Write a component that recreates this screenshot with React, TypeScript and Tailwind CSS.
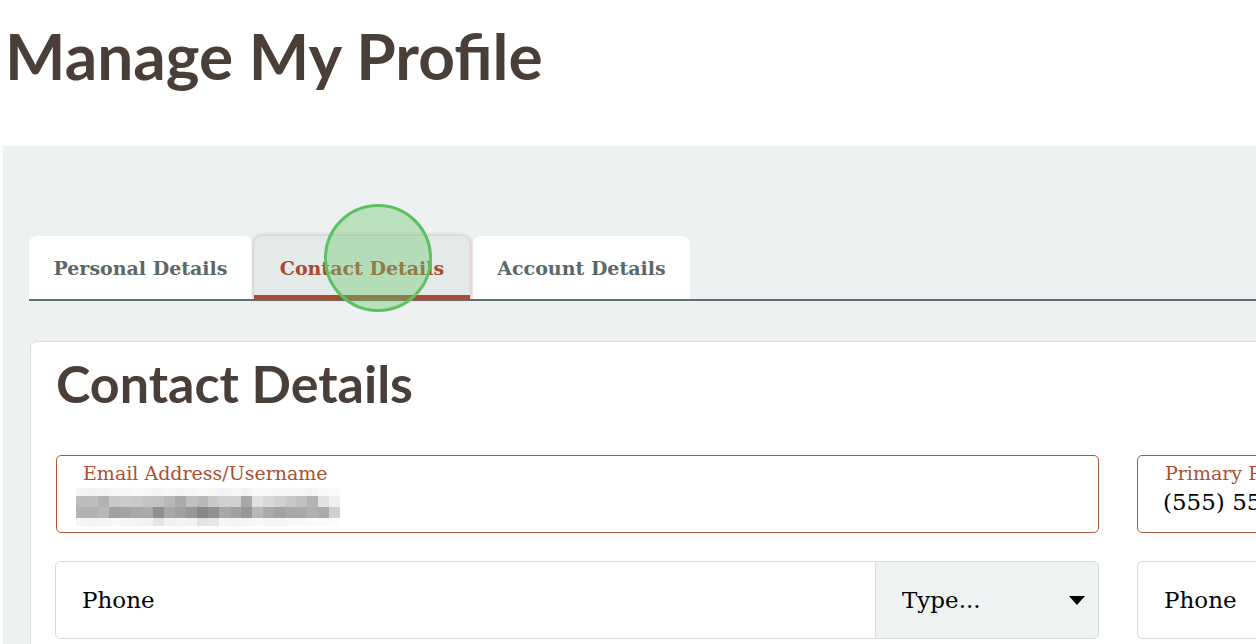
import React from "react";

const serif = { fontFamily: '"DejaVu Serif", "Liberation Serif", serif' };
const sans = { fontFamily: 'Lato, "Noto Sans", sans-serif' };

const row0 = ["#f4f4f4","#f2f2f2","#f4f4f4","#f6f6f6","#f6f6f6","#f8f8f8","#f6f6f6","#f4f4f4","#f6f6f6","#f4f4f4","#f6f6f6","#f8f8f8","#f6f6f6","#f4f4f4","#f6f6f6","#f2f2f2","#f8f8f8","#f8f8f8","#f6f6f6","#f6f6f6","#f6f6f6","#f4f4f4","#f8f8f8","#fafafa"];
const row1 = ["#bcbcbc","#bebebe","#b2b2b2","#c8c8c8","#cbcbcb","#c8c8c8","#c4c4c4","#c2c2c2","#b8b8b8","#aaaaaa","#c0c0c0","#b8b8b8","#c8c8c8","#d0d0d0","#cfcfcf","#a8a8a8","#e0e0e0","#d8d8d8","#d0d0d0","#c8c8c8","#c0c0c0","#b4b4b4","#e2e2e2","#f0f0f0"];
const row2 = ["#b2b2b2","#b2b2b2","#b8b8b8","#a0a0a0","#a2a2a2","#a8a8a8","#aaaaaa","#909090","#a8a8a8","#a0a0a0","#989898","#888888","#909090","#a8a8a8","#a2a2a2","#989898","#b8b8b8","#aaaaaa","#a2a2a2","#a8a8a8","#a8a8a8","#b0b0b0","#aaaaaa","#d0d0d0"];
const row3 = ["#f6f6f6","#f4f4f4","#f6f6f6","#f8f8f8","#f6f6f6","#f4f4f4","#f2f2f2","#e4e4e4","#f0f0f0","#f4f4f4","#f2f2f2","#e2e2e2","#e6e6e6","#f6f6f6","#f4f4f4","#f6f6f6","#f8f8f8","#f6f6f6","#f6f6f6","#f8f8f8","#f8f8f8","#fafafa","#fafafa","#fcfcfc"];

function Pixelated() {
  const rows = [row0, row1, row2, row3];
  const ys = [0, 8, 19, 30];
  const hs = [8, 11, 11, 8];
  return (
    <svg width={264} height={38} viewBox="0 0 264 38" className="block">
      {rows.map((r, ri) =>
        r.map((c, ci) => (
          <rect key={ri + "-" + ci} x={ci * 11} y={ys[ri]} width={11} height={hs[ri]} fill={c} />
        ))
      )}
    </svg>
  );
}

export default function App() {
  return (
    <div className="relative w-[1256px] h-[644px] overflow-hidden bg-white text-[#4a3f38]">
      <h1 className="pl-[5px] pt-[18px] text-[64px] leading-[1.2] font-bold text-[#4a3f38]" style={sans}>
        Manage My Profile
      </h1>

      <div className="mt-[51px] ml-[3px] w-[1600px] bg-[#edf1f2] pt-[90px] pl-[26px] pb-[40px]">
        <div className="flex items-end border-b-2 border-[#5f6e6e]" style={serif}>
          <div className="w-[223px] h-[63px] rounded-t-lg bg-white flex items-center justify-center pt-[2px] text-[19px] font-bold text-[#5b6868]">
            Personal Details
          </div>
          <div className="ml-[2px] w-[216px] h-[63px] rounded-t-lg bg-[#e4e9ea] border-b-4 border-[#a84a2c] shadow-[0_0_4px_rgba(168,74,44,0.45)] flex items-center justify-center pt-[6px] text-[19px] font-bold text-[#a84a2c]">
            Contact Details
          </div>
          <div className="ml-[3px] w-[217px] h-[63px] rounded-t-lg bg-white flex items-center justify-center pt-[2px] text-[19px] font-bold text-[#5b6868]">
            Account Details
          </div>
        </div>

        <div className="mt-[40px] ml-[1px] bg-white border border-[#d6dede] rounded-md pl-[25px] pt-[10px] pb-[40px]">
          <h2 className="text-[52px] leading-[1.2] font-bold text-[#4a3f38]" style={sans}>
            Contact Details
          </h2>

          <div className="mt-[41px] flex gap-[38px]" style={serif}>
            <div className="shrink-0 w-[1043px] h-[78px] border border-[#b0583a] rounded-[5px] pl-[19px] pt-[5px]">
              <div className="pl-[7px] text-[19px] leading-[24px] text-[#a8502f]">Email Address/Username</div>
              <div className="mt-[3px]">
                <Pixelated />
              </div>
            </div>
            <div className="shrink-0 w-[400px] h-[78px] border border-[#b0583a] rounded-[5px] pl-[27px] pt-[5px]">
              <div className="text-[19px] leading-[24px] text-[#a8502f]">Primary Phone</div>
              <div className="-ml-[2px] text-[23px] leading-[34px] text-black">(555) 555-5555</div>
            </div>
          </div>

          <div className="mt-[28px] flex gap-[38px]" style={serif}>
            <div className="shrink-0 w-[1044px] -ml-[1px] h-[78px] border border-[#d5dddd] rounded-[5px] flex overflow-hidden">
              <div className="flex-1 flex items-center pl-[26px] text-[23px] text-black">Phone</div>
              <div className="w-[223px] bg-[#eef2f3] border-l border-[#d5dddd] flex items-center justify-between pl-[26px] pr-[13px] text-[23px] text-black">
                <span>Type...</span>
                <svg width="16" height="9" viewBox="0 0 16 9">
                  <path d="M0 0 H16 L8 9 Z" fill="#000" />
                </svg>
              </div>
            </div>
            <div className="shrink-0 w-[400px] h-[78px] border border-[#d5dddd] rounded-[5px] flex items-center pl-[26px] text-[23px] text-black">
              Phone
            </div>
          </div>
        </div>
      </div>

      <div className="absolute left-[324px] top-[204px] w-[108px] h-[108px] rounded-full border-[3px] border-[#5cc160] bg-[rgba(110,200,110,0.4)]" />
    </div>
  );
}
